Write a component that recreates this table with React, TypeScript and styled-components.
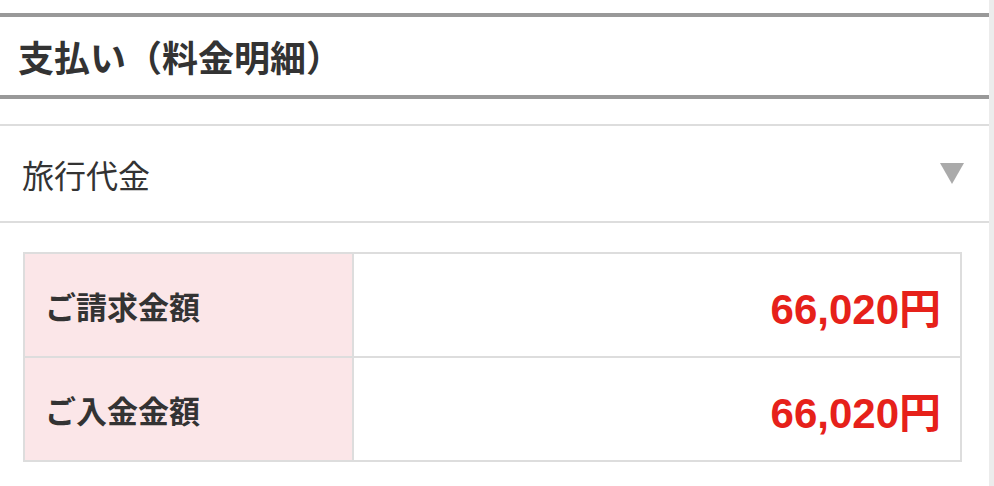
import React from "react";
import styled, { createGlobalStyle } from "styled-components";

const GlobalStyle = createGlobalStyle`
    html, body {
        margin: 0;
        padding: 0;
        background-color: #ececec;
    }
    body {
        font-family: "Noto Sans CJK JP", "Noto Sans", sans-serif;
        color: #333;
    }
`;

const Page = styled.div`
    width: 989px;
    min-height: 486px;
    background-color: #fff;
    padding-top: 13px;
    box-sizing: border-box;
`;

const SectionTitle = styled.h2`
    margin: 0;
    height: 86px;
    box-sizing: border-box;
    border-top: 4px solid #999;
    border-bottom: 4px solid #999;
    padding-left: 18px;
    display: flex;
    align-items: center;
    font-size: 36px;
    font-weight: 700;
    color: #333;
`;

const Accordion = styled.div`
    margin-top: 25px;
    height: 99px;
    box-sizing: border-box;
    border-top: 2px solid #ddd;
    border-bottom: 2px solid #ddd;
    padding: 0 25px 0 22px;
    display: flex;
    align-items: center;
    justify-content: space-between;
    cursor: pointer;
`;

const AccordionLabel = styled.span`
    font-size: 32px;
    font-weight: 400;
    color: #333;
`;

const Arrow = styled.span`
    width: 0;
    height: 0;
    border-left: 12px solid transparent;
    border-right: 12px solid transparent;
    border-top: 21px solid #aaa;
`;

const Table = styled.table`
    margin: 29px 0 0 23px;
    width: 939px;
    table-layout: fixed;
    border-collapse: collapse;
    border: 2px solid #ddd;
`;

const Row = styled.tr`
    height: 104px;
`;

const HeadCell = styled.th`
    width: 307px;
    background-color: #fbe6e8;
    border: 2px solid #ddd;
    padding: 0 0 0 20px;
    text-align: left;
    font-size: 31px;
    font-weight: 700;
    color: #333;
`;

const ValueCell = styled.td`
    border: 2px solid #ddd;
    padding: 0 19px 0 0;
    text-align: right;
    font-family: "Liberation Sans", "Noto Sans CJK JP", sans-serif;
    font-size: 42px;
    font-weight: 700;
    color: #e6211a;
`;

const rows = [
  { label: "ご請求金額", amount: "66,020円" },
  { label: "ご入金金額", amount: "66,020円" },
];

const App: React.FC = () => {
  return (
    <>
      <GlobalStyle />
      <Page>
        <SectionTitle>支払い（料金明細）</SectionTitle>
        <Accordion>
          <AccordionLabel>旅行代金</AccordionLabel>
          <Arrow />
        </Accordion>
        <Table>
          <tbody>
            {rows.map((r) => (
              <Row key={r.label}>
                <HeadCell>{r.label}</HeadCell>
                <ValueCell>{r.amount}</ValueCell>
              </Row>
            ))}
          </tbody>
        </Table>
      </Page>
    </>
  );
};

export default App;
